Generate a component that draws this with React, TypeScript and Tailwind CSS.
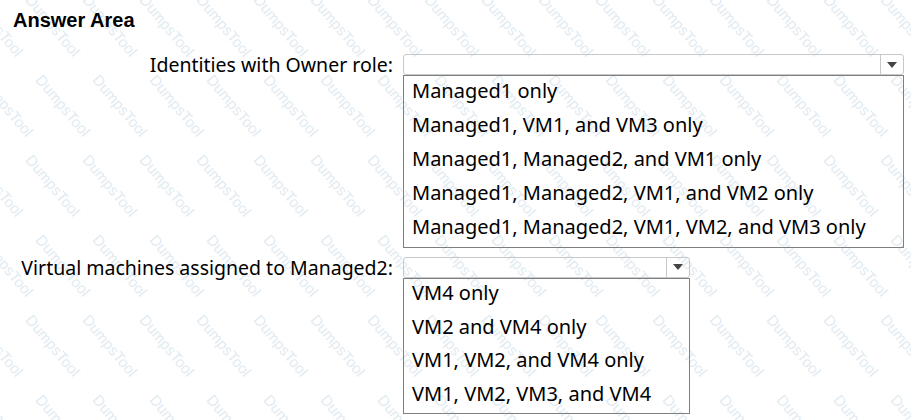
import React from "react";

type Question = {
  label: string;
  width: string;
  row: string;
  options: string[];
};

const questions: Question[] = [
  {
    label: "Identities with Owner role:",
    width: "w-[501px]",
    row: "h-[34.2px]",
    options: [
      "Managed1 only",
      "Managed1, VM1, and VM3 only",
      "Managed1, Managed2, and VM1 only",
      "Managed1, Managed2, VM1, and VM2 only",
      "Managed1, Managed2, VM1, VM2, and VM3 only",
    ],
  },
  {
    label: "Virtual machines assigned to Managed2:",
    width: "w-[287px]",
    row: "h-[33.5px]",
    options: ["VM4 only", "VM2 and VM4 only", "VM1, VM2, and VM4 only", "VM1, VM2, VM3, and VM4"],
  },
];

function Watermark() {
  const cols = Array.from({ length: 18 }, (_, i) => i);
  const rows = Array.from({ length: 6 }, (_, i) => i);
  return (
    <div className="absolute inset-0 pointer-events-none overflow-hidden">
      {rows.map((r) =>
        cols.map((c) => (
          <span
            key={`${r}-${c}`}
            className="absolute text-[15px] text-[#e2ebf2] font-['Liberation_Sans',sans-serif] rotate-[50deg] origin-top-left whitespace-nowrap"
            style={{ left: c * 57 - 20 + (r % 2) * 10, top: r * 80 - 10 }}
          >
            DumpsTool
          </span>
        ))
      )}
    </div>
  );
}

function Dropdown({ q }: { q: Question }) {
  return (
    <div className="flex">
      <div className="w-[393px] h-[21px] flex items-center justify-end">
        <span className="text-[19.5px] leading-none whitespace-nowrap">{q.label}</span>
      </div>
      <div className="ml-[10px] flex flex-col">
        <div className={`${q.width} h-[21px] border border-[#c8c8c8] rounded-[3px] flex justify-end`}>
          <div className="w-[23px] border-l border-[#c8c8c8] flex items-center justify-center">
            <svg width="10" height="6" viewBox="0 0 10 6">
              <path d="M0 0 H10 L5 6 Z" fill="#444" />
            </svg>
          </div>
        </div>
        <div className={`${q.width} border border-[#7f7f7f] pl-[8px]`}>
          {q.options.map((o) => (
            <div key={o} className={`${q.row} flex items-center pb-[5px] text-[20px] leading-none whitespace-nowrap`}>
              {o}
            </div>
          ))}
        </div>
      </div>
    </div>
  );
}

export default function App() {
  return (
    <div className="relative w-[911px] h-[420px] bg-white text-black overflow-hidden font-['Noto_Sans','Open_Sans',sans-serif]">
      <Watermark />
      <div className="relative">
        <h2 className="pl-[13px] pt-[9px] text-[20px] leading-[22px] font-bold font-['Liberation_Sans',Arial,sans-serif]">
          Answer Area
        </h2>
        <div className="mt-[23px] flex flex-col gap-[9px]">
          {questions.map((q) => (
            <Dropdown key={q.label} q={q} />
          ))}
        </div>
      </div>
    </div>
  );
}
